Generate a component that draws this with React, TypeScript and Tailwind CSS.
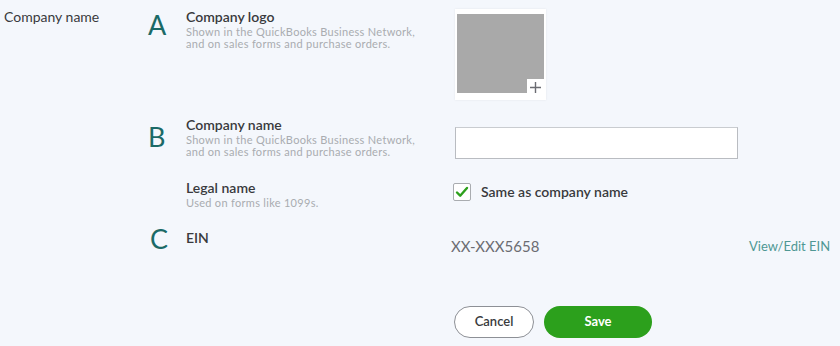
import React from "react";

const font = { fontFamily: "Lato, 'Open Sans', Arial, sans-serif" };

function Letter({ ch, pt }: { ch: string; pt: string }) {
  return (
    <div className={`w-[38px] shrink-0 text-[27px] leading-[27px] text-[#1b6a67] ${pt}`}>{ch}</div>
  );
}

function Desc({ title, sub }: { title: string; sub?: string[] }) {
  return (
    <div className="w-[269px] shrink-0">
      <div className="text-[14px] leading-[16px] font-semibold text-[#393a3d]">{title}</div>
      {sub && (
        <div className="mt-[1px] text-[11px] leading-[11.5px] tracking-[0.3px] text-[#a9acb0]">
          {sub.map((s) => (
            <div key={s}>{s}</div>
          ))}
        </div>
      )}
    </div>
  );
}

export default function App() {
  return (
    <div style={font} className="w-[840px] h-[346px] bg-[#f4f7fc] flex overflow-hidden">
      <div className="w-[148px] shrink-0 pl-[4px] pt-[9px] text-[14px] leading-[16px] text-[#393a3d]">
        Company name
      </div>
      <div className="flex-1 flex flex-col">
        {/* Row 1: logo */}
        <div className="flex mt-[9px] h-[108px]">
          <Letter ch="A" pt="pt-[2px]" />
          <Desc
            title="Company logo"
            sub={["Shown in the QuickBooks Business Network,", "and on sales forms and purchase orders."]}
          />
          <div>
            <div className="relative w-[91px] h-[91px] bg-white shadow-[0_0_2px_rgba(0,0,0,0.08)] pt-[5px] px-[2px]">
              <div className="w-[87px] h-[79px] bg-[#a9a9a9]" />
              <div className="absolute right-[2px] bottom-[4px] w-[17px] h-[17px] bg-white flex items-center justify-center">
                <svg width="13" height="13" viewBox="0 0 13 13">
                  <path d="M6.5 1v11M1 6.5h11" stroke="#6b6c72" strokeWidth="1.4" />
                </svg>
              </div>
            </div>
          </div>
        </div>
        {/* Row 2: company name */}
        <div className="flex h-[63px]">
          <Letter ch="B" pt="pt-[6px]" />
          <Desc
            title="Company name"
            sub={["Shown in the QuickBooks Business Network,", "and on sales forms and purchase orders."]}
          />
          <div className="pt-[10px]">
            <div className="w-[283px] h-[32px] bg-white border border-[#b9bcc1] border-t-[#c9ccd0]" />
          </div>
        </div>
        {/* Row 3: legal name */}
        <div className="flex h-[44px]">
          <div className="w-[38px] shrink-0" />
          <Desc title="Legal name" sub={["Used on forms like 1099s."]} />
          <div className="pt-[3px] -ml-[2px] flex items-start">
            <div className="flex items-center gap-[10px]">
              <div className="w-[18px] h-[18px] bg-white border border-[#a9acb0] rounded-[2px] flex items-center justify-center">
                <svg width="14" height="12" viewBox="0 0 14 12">
                  <path d="M2 6.5l3.2 3.2L12 2" fill="none" stroke="#2ca01c" strokeWidth="2.4" strokeLinecap="round" strokeLinejoin="round" />
                </svg>
              </div>
              <span className="text-[14px] leading-[16px] font-semibold text-[#393a3d]">Same as company name</span>
            </div>
          </div>
        </div>
        {/* Row 4: EIN */}
        <div className="flex h-[82px]">
          <Letter ch="C" pt="pt-[1px] pl-[2px]" />
          <div className="w-[265px] shrink-0 pt-[6px] text-[14px] leading-[16px] font-semibold text-[#393a3d]">EIN</div>
          <div className="w-[298px] shrink-0 pt-[13px] text-[15px] leading-[18px] text-[#6b6c72]">XX-XXX5658</div>
          <div className="pt-[13px] text-[13px] leading-[18px] text-[#4f9794]">View/Edit EIN</div>
        </div>
        {/* Buttons */}
        <div className="flex pl-[306px] gap-[10px]">
          <button className="w-[80px] h-[32px] rounded-full bg-white border border-[#8d9096] text-[13px] font-semibold text-[#393a3d]">
            Cancel
          </button>
          <button className="w-[108px] h-[32px] rounded-full bg-[#2ca01c] text-[13px] font-bold text-white">
            Save
          </button>
        </div>
      </div>
    </div>
  );
}
